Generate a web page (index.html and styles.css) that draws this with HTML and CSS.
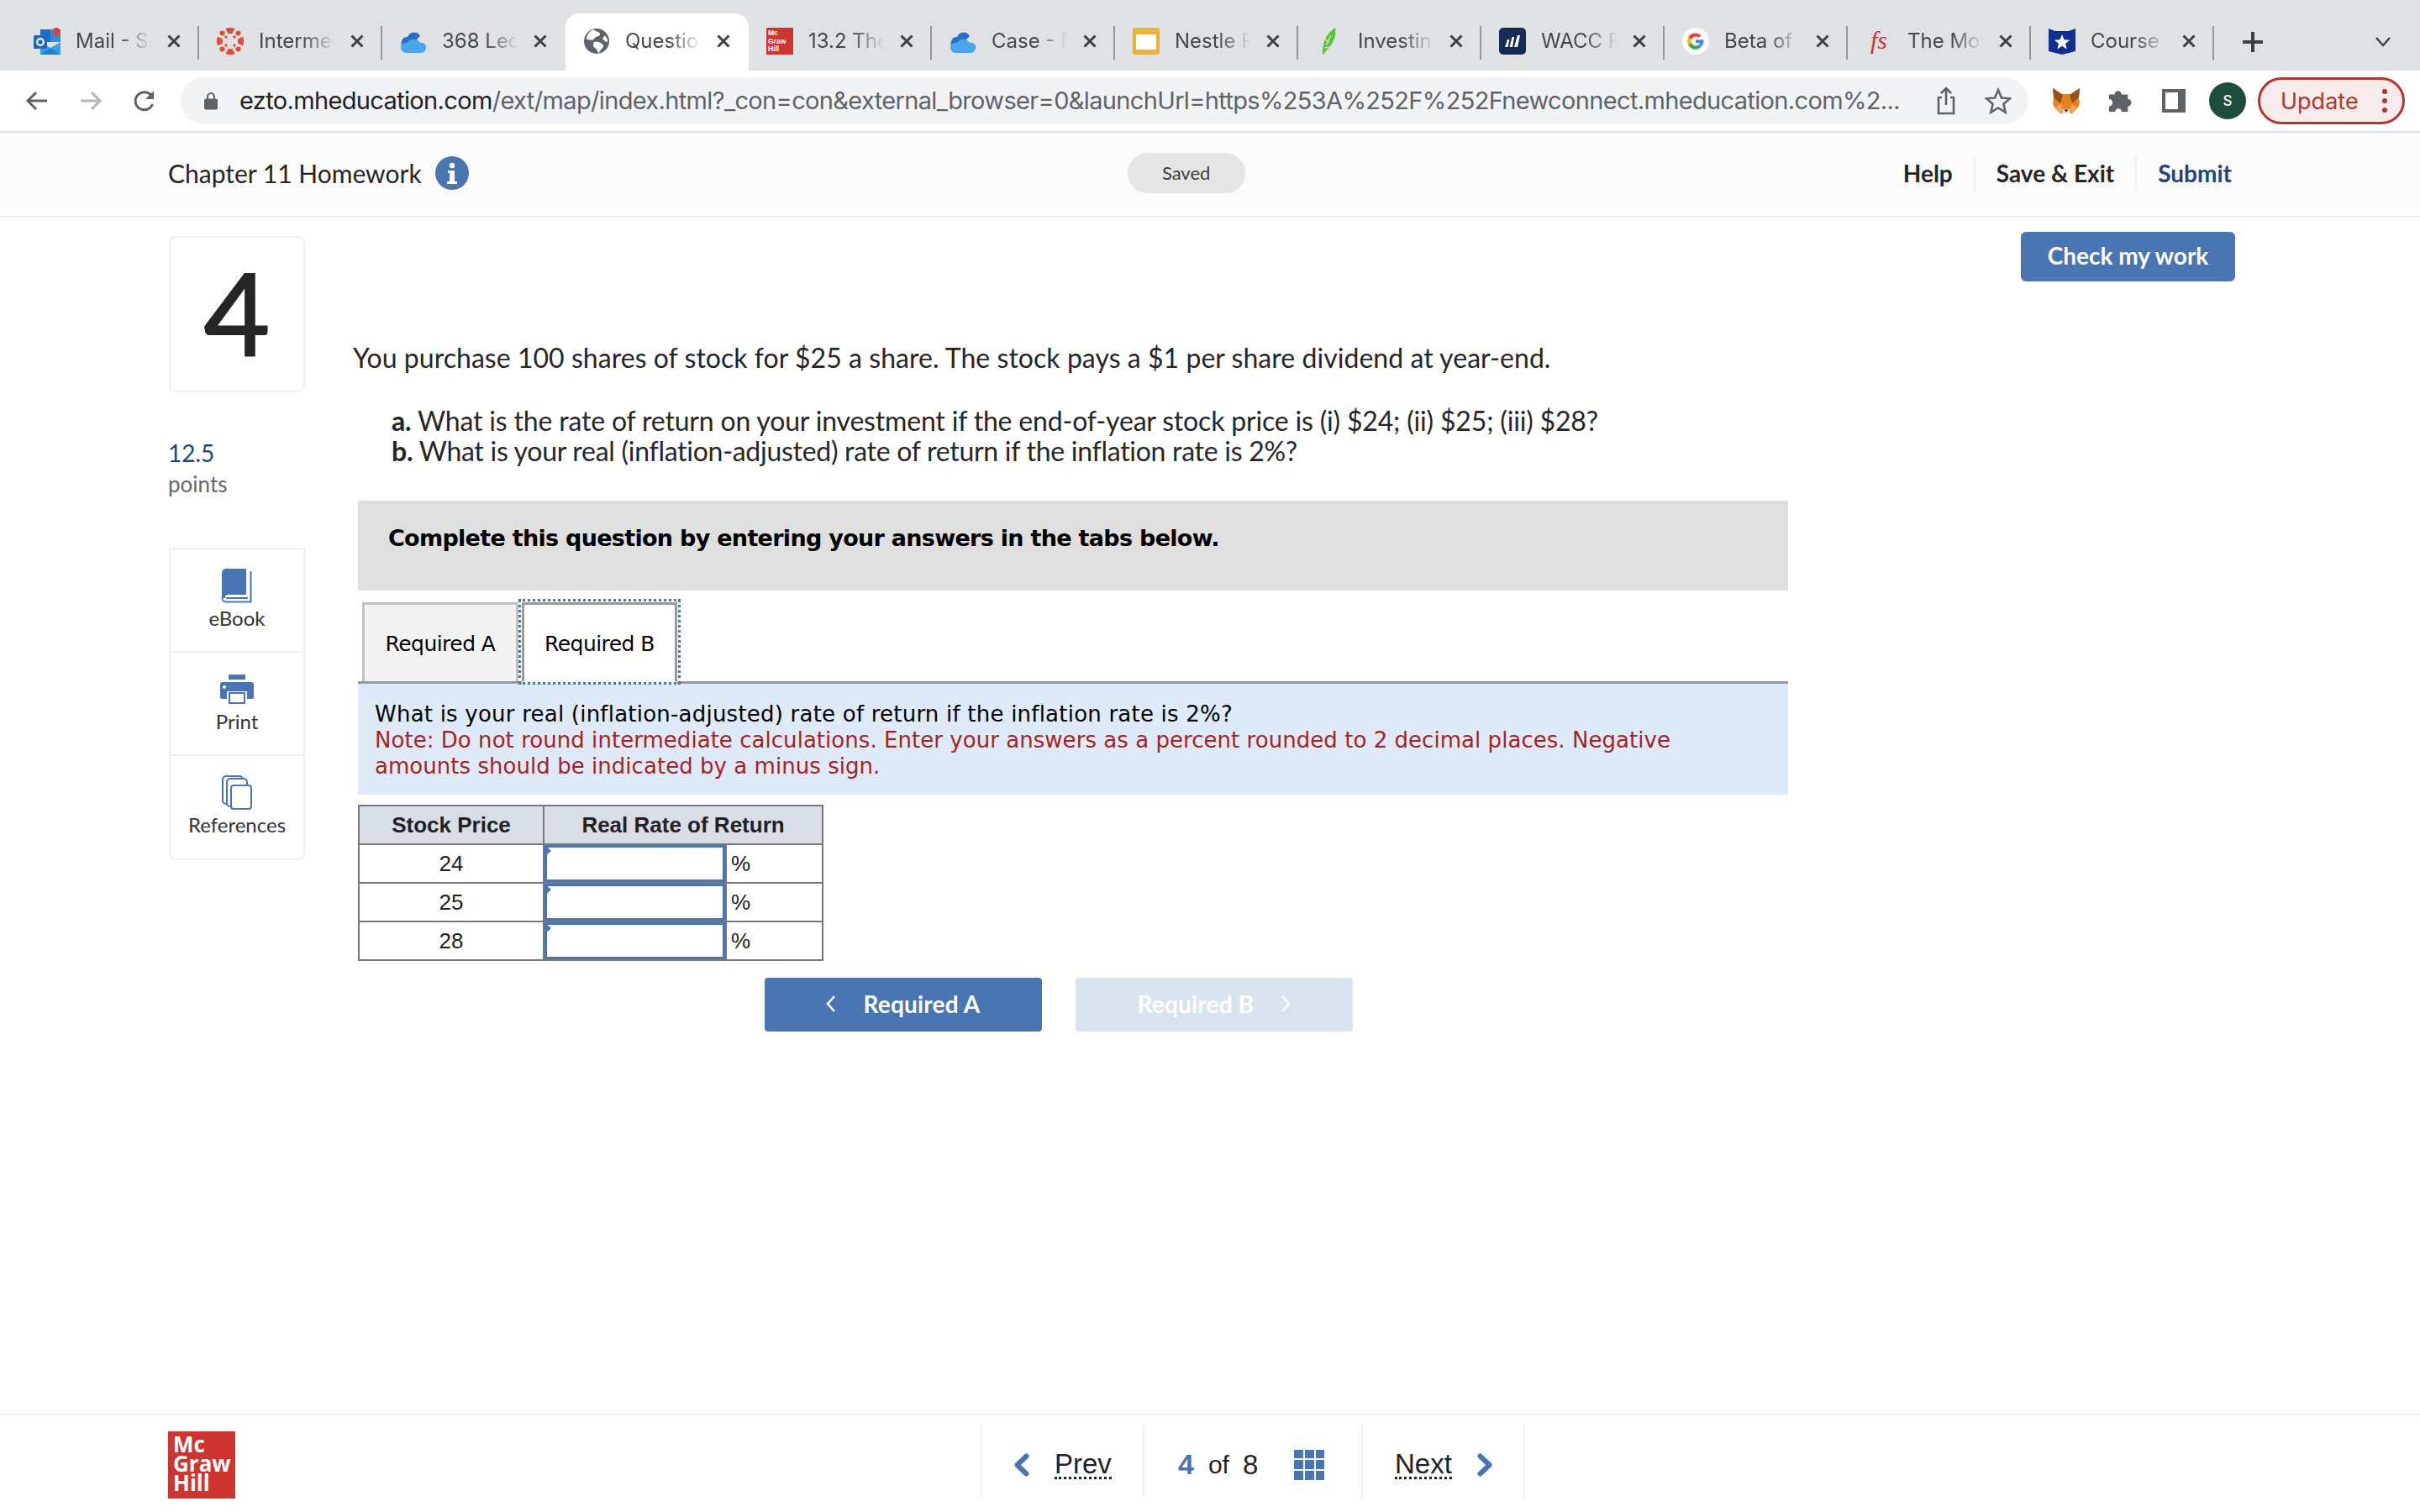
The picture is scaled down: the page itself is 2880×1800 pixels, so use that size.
FILE: index.html
```html
<!DOCTYPE html>
<html lang="en">
<head>
<meta charset="utf-8">
<title>Question 4 - Chapter 11 Homework</title>
<link rel="stylesheet" href="styles.css">
</head>
<body>
<div class="tabstrip">
  <div class="tab"><svg class="fav" viewBox="0 0 32 32"><rect x="8" y="2" width="24" height="15" fill="#1a6fc4"/><rect x="20" y="2" width="12" height="15" fill="#2b8fdc"/><path d="M8 17l12 7 12-7v15H8z" fill="#3aa0e6"/><path d="M8 32l12-8 12 8z" fill="#1f7fd0"/><rect y="9" width="16" height="16" rx="1.5" fill="#1e68bd"/><circle cx="27" cy="5" r="5" fill="#c64a50"/><circle cx="8" cy="17" r="3.800" fill="none" stroke="#fff" stroke-width="2.200"/></svg><span class="title">Mail - Sa</span><svg class="close" viewBox="0 0 16 16"><path d="M1.5 1.5l13 13M14.500 1.500l-13 13"/></svg></div>
  <div class="tab"><svg class="fav" viewBox="0 0 32 32" fill="#de4c36"><path d="M10.500 1a15.500 15.500 0 0 1 11 0L18.500 7h-5zM10.500 31a15.500 15.500 0 0 0 11 0l-3-6h-5zM1 10.500a15.500 15.500 0 0 0 0 11l6-3v-5zM31 10.500a15.500 15.500 0 0 1 0 11l-6-3v-5z"/><circle cx="6.500" cy="6.500" r="3"/><circle cx="25.500" cy="6.500" r="3"/><circle cx="6.500" cy="25.500" r="3"/><circle cx="25.500" cy="25.500" r="3"/><circle cx="11" cy="11" r="1.700"/><circle cx="21" cy="11" r="1.700"/><circle cx="11" cy="21" r="1.700"/><circle cx="21" cy="21" r="1.700"/></svg><span class="title">Intermediate</span><svg class="close" viewBox="0 0 16 16"><path d="M1.5 1.5l13 13M14.500 1.500l-13 13"/></svg></div>
  <div class="tab before-active"><svg class="fav" viewBox="0 0 32 32"><path d="M3 24C-1 17 4 10 9 11c3-7 12-7 15-1l-6 6-9 8z" fill="#2a6fc9"/><path d="M8 30c-4 0-7-3-7-6s3-7 8-6c3-5 11-6 15 0 5-1 8 3 7 7-1 3-3 5-6 5z" fill="#4aa4e8"/></svg><span class="title">368 Lecture</span><svg class="close" viewBox="0 0 16 16"><path d="M1.5 1.5l13 13M14.500 1.500l-13 13"/></svg></div>
  <div class="tab active"><svg class="fav" viewBox="0 0 32 32"><circle cx="16" cy="16" r="15" fill="#5f6368"/><path d="M12 2c3 3 9 3 8 6s-6 2-7 5-6 1-9 1c0-6 4-10 8-12zM14 17c4-1 8 1 10 4 1 3-3 4-4 7-1 2-3 2-3 0 0-3-5-4-5-7 0-2 0-4 2-4zM26 9l3 5v3c-2 0-5-2-6-4z" fill="#fff"/></svg><span class="title">Question 4</span><svg class="close" viewBox="0 0 16 16"><path d="M1.5 1.5l13 13M14.500 1.500l-13 13"/></svg></div>
  <div class="tab"><div class="fav mh-small"><span>Mc</span><span>Graw</span><span>Hill</span></div><span class="title">13.2 The</span><svg class="close" viewBox="0 0 16 16"><path d="M1.5 1.5l13 13M14.500 1.500l-13 13"/></svg></div>
  <div class="tab"><svg class="fav" viewBox="0 0 32 32"><path d="M3 24C-1 17 4 10 9 11c3-7 12-7 15-1l-6 6-9 8z" fill="#2a6fc9"/><path d="M8 30c-4 0-7-3-7-6s3-7 8-6c3-5 11-6 15 0 5-1 8 3 7 7-1 3-3 5-6 5z" fill="#4aa4e8"/></svg><span class="title">Case - Nestle</span><svg class="close" viewBox="0 0 16 16"><path d="M1.5 1.5l13 13M14.500 1.500l-13 13"/></svg></div>
  <div class="tab"><svg class="fav" viewBox="0 0 32 32"><rect width="32" height="32" rx="3" fill="#eab43c"/><rect x="4" y="8" width="24" height="18" fill="#fff"/></svg><span class="title">Nestle Pres</span><svg class="close" viewBox="0 0 16 16"><path d="M1.5 1.5l13 13M14.500 1.500l-13 13"/></svg></div>
  <div class="tab"><svg class="fav" viewBox="0 0 32 32"><path d="M8 32c0-6 0-14 5-22 3-5 7-8 10-10 1 6 0 13-4 19-3 5-7 8-10 13z" fill="#5ac53b"/><path d="M12 21l6-12M11 14l5 3M10 24l5-1" stroke="#dff5d5" stroke-width="1.200" fill="none"/></svg><span class="title">Investing</span><svg class="close" viewBox="0 0 16 16"><path d="M1.5 1.5l13 13M14.500 1.500l-13 13"/></svg></div>
  <div class="tab"><svg class="fav" viewBox="0 0 32 32"><rect width="32" height="32" rx="5" fill="#162c55"/><path d="M7 23l3-9h2.500l-2 9zM12.500 23l3-12H18l-2 12zM18 23l4-14h3l-3 14z" fill="#fff"/></svg><span class="title">WACC For</span><svg class="close" viewBox="0 0 16 16"><path d="M1.5 1.5l13 13M14.500 1.500l-13 13"/></svg></div>
  <div class="tab"><svg class="fav" viewBox="0 0 32 32"><circle cx="16" cy="16" r="16" fill="#fff"/><path d="M16 6.500a9.500 9.500 0 0 1 6.500 2.500l-3 3A5.300 5.300 0 0 0 10.900 14L7.400 11.300A9.500 9.500 0 0 1 16 6.500z" fill="#e94235"/><path d="M7.400 11.300L10.900 14a5.500 5.500 0 0 0 0 4l-3.500 2.700a9.700 9.700 0 0 1 0-9.400z" fill="#fabb05"/><path d="M7.400 20.700L10.900 18a5.300 5.300 0 0 0 8 2.600l3.300 2.600A9.600 9.600 0 0 1 7.400 20.700z" fill="#34a853"/><path d="M25.300 14.200H16v3.900h5.300a4.600 4.600 0 0 1-2.400 2.500l3.300 2.600c2.400-2.300 3.700-5.500 3.100-9z" fill="#4285f4"/></svg><span class="title">Beta of a</span><svg class="close" viewBox="0 0 16 16"><path d="M1.5 1.5l13 13M14.500 1.500l-13 13"/></svg></div>
  <div class="tab"><span class="fav fs-icon">fs</span><span class="title">The Most</span><svg class="close" viewBox="0 0 16 16"><path d="M1.5 1.5l13 13M14.500 1.500l-13 13"/></svg></div>
  <div class="tab"><svg class="fav" viewBox="0 0 32 32"><path d="M0 1l8 3h16l8-3v27l-16 4-16-4z" fill="#10308f"/><path d="M16 8l2.500 6.300 6.700.400-5.200 4.200 1.700 6.500L16 21.800l-5.700 3.600 1.700-6.500-5.200-4.200 6.700-.400z" fill="#fff"/></svg><span class="title">Course He</span><svg class="close" viewBox="0 0 16 16"><path d="M1.5 1.5l13 13M14.500 1.500l-13 13"/></svg></div>
  <svg class="newtab" viewBox="0 0 24 24"><path d="M12 0v24M0 12h24"/></svg>
  <svg class="tabmenu" viewBox="0 0 18 12"><path d="M1 1l8 9 8-9"/></svg>
</div>

<div class="toolbar">
  <svg class="tool back" viewBox="0 0 28 28"><path d="M26 14H3M13 4L3 14l10 10"/></svg>
  <svg class="tool fwd" viewBox="0 0 28 28"><path d="M2 14h23M15 4l10 10-10 10"/></svg>
  <svg class="tool reload" viewBox="0 0 28 28"><path d="M23.500 18a10.500 10.500 0 1 1-1-9.500"/><path class="solid" d="M25 2v10H15z"/></svg>
  <div class="omnibox">
    <svg class="lock" viewBox="0 0 16 22"><path d="M4 9V6a4 4 0 0 1 8 0v3" fill="none" stroke="#5f6368" stroke-width="2"/><rect y="8.500" width="16" height="13" rx="2" fill="#5f6368"/></svg>
    <span class="url"><span class="host">ezto.mheducation.com</span>/ext/map/index.html?_con=con&amp;external_browser=0&amp;launchUrl=https%253A%252F%252Fnewconnect.mheducation.com%2...</span>
    <svg class="share" viewBox="0 0 22 34"><path d="M6 13H2v19h18V13h-4M11 22V2M5 8l6-6 6 6"/></svg>
    <svg class="star" viewBox="0 0 32 32"><path d="M16 3l4 9.500 10 .800-7.600 6.500 2.300 9.900L16 24.500l-8.700 5.200 2.300-9.900L2 13.300l10-.800z"/></svg>
  </div>
  <svg class="fox" viewBox="0 0 32 30"><path d="M0 0l11 7h10L32 0l-1 11 1 8-3 5-6 6H9l-6-6-3-5 1-8z" fill="#e8821e"/><path d="M0 0l12 8-3 10-8-7zM32 0L20 8l3 10 8-7z" fill="#8f5220"/><path d="M3 24l6-6 3 7-3 5zM29 24l-6-6-3 7 3 5z" fill="#efa35c"/><path d="M12 25h8l1 5H11z" fill="#e6dcd2"/><path d="M13.500 25.500h5l-2.500 3z" fill="#222"/></svg>
  <svg class="puzzle" viewBox="0 0 30 30"><path d="M1 8h7a4.500 4.500 0 1 1 9 0h8v6a4.500 4.500 0 1 1 0 9v7H17a4 4 0 0 0-8 0H1v-7a4 4 0 0 0 0-9z"/></svg>
  <div class="sidepanel"></div>
  <div class="avatar">S</div>
  <div class="update"><span>Update</span><i class="kebab"></i></div>
</div>

<header class="apphead">
  <h1>Chapter 11 Homework</h1>
  <svg class="info" viewBox="0 0 40 40"><circle cx="20" cy="20" r="20" fill="#4a75b3"/><circle cx="20" cy="11" r="3.200" fill="#fff"/><path d="M15 17h8v13h3v3H14v-3h3v-10h-2z" fill="#fff"/></svg>
  <div class="saved">Saved</div>
  <nav class="headnav"><a>Help</a><a>Save &amp; Exit</a><a class="submit">Submit</a></nav>
</header>

<main class="page">
  <aside class="side">
    <div class="qnum">4</div>
    <div class="score">12.5</div>
    <div class="points">points</div>
    <div class="tools">
      <div class="toolitem"><svg viewBox="0 0 36 41"><path d="M5 0h24v31H7a3 3 0 0 0-3 3v1H0V5a5 5 0 0 1 5-5z" fill="#4a75b3"/><path d="M34.500 3v36.500H5A4.500 4.500 0 0 1 .500 35a4.500 4.500 0 0 1 4.500-4.500" fill="none" stroke="#4a75b3" stroke-width="2"/><path d="M5 35h26" stroke="#4a75b3" stroke-width="2"/></svg><span>eBook</span></div>
      <div class="toolitem"><svg viewBox="0 0 40 35"><rect x="10" width="20" height="6" fill="#4a75b3"/><path d="M3 9h34a3 3 0 0 1 3 3v15a2 2 0 0 1-2 2h-6v-9H8v9H2a2 2 0 0 1-2-2V12a3 3 0 0 1 3-3z" fill="#4a75b3"/><circle cx="5" cy="15" r="2" fill="#fff"/><rect x="11" y="22" width="18" height="12" fill="#fff" stroke="#4a75b3" stroke-width="2"/></svg><span>Print</span></div>
      <div class="toolitem"><svg viewBox="0 0 36 41" fill="#fff" stroke="#4a75b3" stroke-width="2"><rect x="1" y="1" width="24" height="33" rx="4"/><rect x="6" y="4" width="24" height="33" rx="4"/><rect x="11" y="12" width="24" height="28" rx="3"/></svg><span>References</span></div>
    </div>
  </aside>

  <section class="question">
    <p class="stem">You purchase 100 shares of stock for $25 a share. The stock pays a $1 per share dividend at year-end.</p>
    <div class="parts">
      <p class="part-a"><b>a.</b> What is the rate of return on your investment if the end-of-year stock price is (i) $24; (ii) $25; (iii) $28?</p>
      <p class="part-b"><b>b.</b> What is your real (inflation-adjusted) rate of return if the inflation rate is 2%?</p>
    </div>
    <div class="worksheet">
      <div class="banner">Complete this question by entering your answers in the tabs below.</div>
      <div class="qtabs">
        <div class="qtab">Required A</div>
        <div class="qtab current">Required B</div>
      </div>
      <div class="prompt">
        <div>What is your real (inflation-adjusted) rate of return if the inflation rate is 2%?</div>
        <div class="note">Note: Do not round intermediate calculations. Enter your answers as a percent rounded to 2 decimal places. Negative amounts should be indicated by a minus sign.</div>
      </div>
      <table class="answers">
        <colgroup><col class="col-price"><col class="col-entry"><col class="col-unit"></colgroup>
        <thead><tr><th>Stock Price</th><th colspan="2">Real Rate of Return</th></tr></thead>
        <tbody>
          <tr><td>24</td><td class="entry"><div class="flagged"><input type="text" aria-label="Real rate at 24"></div></td><td class="unit">%</td></tr>
          <tr><td>25</td><td class="entry"><div class="flagged"><input type="text" aria-label="Real rate at 25"></div></td><td class="unit">%</td></tr>
          <tr><td>28</td><td class="entry"><div class="flagged"><input type="text" aria-label="Real rate at 28"></div></td><td class="unit">%</td></tr>
        </tbody>
      </table>
      <div class="stepper">
        <button class="step"><svg viewBox="0 0 12 22"><path d="M10 2L2 11l8 9"/></svg>Required A</button>
        <button class="step off">Required B<svg viewBox="0 0 12 22"><path d="M2 2l8 9-8 9"/></svg></button>
      </div>
    </div>
  </section>

  <button class="check">Check my work</button>
</main>

<footer class="foot">
  <div class="mhlogo"><span>Mc</span><span>Graw</span><span>Hill</span></div>
  <div class="pager">
    <div class="pcell prev"><svg viewBox="0 0 19 28"><path d="M15.500 3.500L4.500 14l11 10.500"/></svg><a>Prev</a></div>
    <div class="pcell count"><b>4</b><span class="of">of</span><span class="total">8</span><div class="gridicon"><i></i><i></i><i></i><i></i><i></i><i></i><i></i><i></i><i></i></div></div>
    <div class="pcell next"><a>Next</a><svg viewBox="0 0 19 28"><path d="M3.500 3.500L14.500 14l-11 10.500"/></svg></div>
  </div>
</footer>
</body>
</html>
```
FILE: styles.css
```css
* { box-sizing: border-box; }
html, body { margin: 0; padding: 0; }
body { width: 2880px; height: 1800px; display: flex; flex-direction: column; background: #fff; font-family: Lato, "Liberation Sans", sans-serif; color: #262626; overflow: hidden; }
p, h1 { margin: 0; font-weight: 400; }

/* browser tab strip */
.tabstrip { height: 84px; background: #dfe1e5; padding-left: 19px; display: flex; align-items: flex-end; flex: none; }
.tab { position: relative; width: 218px; height: 68px; padding: 0 0 2px 21px; display: flex; align-items: center; flex: none; font-family: Inter, sans-serif; }
.tab::after { content: ""; position: absolute; right: 0; top: 15px; height: 40px; width: 2px; background: #93959a; }
.tab.before-active::after, .tab.active::after { display: none; }
.tab.active { background: #fff; border-radius: 16px 16px 0 0; }
.fav { width: 32px; height: 32px; flex: none; }
.title { width: 95px; margin-left: 18px; font-size: 24px; line-height: 32px; color: #45474b; white-space: nowrap; overflow: hidden; -webkit-mask-image: linear-gradient(90deg, #000 55%, transparent 95%); mask-image: linear-gradient(90deg, #000 55%, transparent 95%); }
.close { width: 16px; height: 16px; margin-left: 14px; flex: none; fill: none; stroke: #3c3f43; stroke-width: 3; }
.mh-small { background: #cf3530; color: #fff; font: 700 8.5px/9.5px "Liberation Sans", sans-serif; padding: 2px 0 0 2px; display: flex; flex-direction: column; }
.fs-icon { font: italic 400 30px/30px "Liberation Serif", serif; color: #c8363a; text-align: center; }
.newtab { width: 24px; height: 24px; margin: 0 0 22px 34px; fill: none; stroke: #3c4043; stroke-width: 4; flex: none; }
.tabmenu { width: 18px; height: 12px; margin: 0 0 28px 134px; fill: none; stroke: #3c4043; stroke-width: 2.4; flex: none; }

/* browser toolbar */
.toolbar { height: 74px; flex: none; background: #fff; border-bottom: 2px solid #dfe1e5; display: flex; align-items: flex-start; padding: 8px 0 0 30px; }
.tool { width: 28px; height: 28px; margin-top: 14px; fill: none; stroke: #5f6368; stroke-width: 3; flex: none; }
.tool.fwd { margin-left: 36px; stroke: #b4b6b9; }
.tool.reload { margin-left: 36px; }
.solid { fill: #5f6368; stroke: none; }
.omnibox { width: 2199px; height: 56px; margin-left: 29px; background: #f1f3f4; border-radius: 28px; display: flex; align-items: center; padding-left: 28px; flex: none; }
.lock { width: 16px; height: 22px; flex: none; }
.url { width: 1990px; margin-left: 26px; font: 400 29px/36px Inter, sans-serif; letter-spacing: -0.65px; color: #5f6368; white-space: nowrap; flex: none; }
.host { color: #202124; }
.share { width: 22px; height: 34px; margin-left: 30px; fill: none; stroke: #5f6368; stroke-width: 2.6; flex: none; }
.star { width: 32px; height: 32px; margin-left: 35px; fill: none; stroke: #5f6368; stroke-width: 2.6; flex: none; }
.fox { width: 32px; height: 30px; margin: 13px 0 0 29px; flex: none; }
.puzzle { width: 28px; height: 28px; margin: 13px 0 0 34px; fill: #5f6368; flex: none; }
.sidepanel { width: 28px; height: 28px; margin: 14px 0 0 36px; border: 4px solid #5f6368; border-right-width: 9px; flex: none; }
.avatar { width: 44px; height: 44px; margin: 6px 0 0 28px; border-radius: 50%; background: #1e4d3f; color: #fff; font: 500 17px/44px Inter, sans-serif; text-align: center; flex: none; }
.update { width: 175px; height: 56px; margin-left: 14px; border: 3px solid #b3352b; border-radius: 28px; background: #f7eceb; color: #b3352b; display: flex; align-items: center; padding-left: 24px; font: 400 27px Inter, sans-serif; flex: none; }
.kebab { width: 6px; height: 6px; margin-left: 28px; border-radius: 50%; background: #b3352b; box-shadow: 0 -11px 0 #b3352b, 0 11px 0 #b3352b; }

/* assignment header */
.apphead { height: 101px; flex: none; background: #fbfbfb; border-bottom: 2px solid #f0f0f0; display: flex; align-items: flex-start; padding: 28px 220px 0 200px; }
.apphead h1 { font-size: 30px; line-height: 40px; color: #262626; }
.info { width: 40px; height: 40px; margin: 0 0 0 16px; flex: none; }
.saved { width: 140px; height: 48px; margin: -4px 0 0 784px; background: #e5e5e5; border-radius: 24px; font-size: 22px; line-height: 48px; text-align: center; color: #3d3d3d; flex: none; }
.headnav { margin-left: auto; display: flex; margin-right: 4px; font-size: 28px; font-weight: 700; line-height: 40px; }
.headnav a { padding: 0 25px; border-right: 2px solid #efefef; }
.headnav a:last-child { padding-right: 0; border-right: 0; }
.submit { color: #1f4480; }

/* page body */
.page { flex: 1; display: flex; align-items: flex-start; padding: 22px 220px 0 201px; min-height: 0; }
.side { width: 162px; flex: none; }
.qnum { height: 186px; border: 2px solid #efefef; border-radius: 8px; font-size: 136px; line-height: 178px; text-align: center; color: #262626; -webkit-text-stroke: 2px #262626; }
.score { margin-top: 54px; margin-left: -1px; font-size: 28px; line-height: 36px; color: #1f4480; }
.points { margin-top: 2px; margin-left: -1px; font-size: 26px; line-height: 34px; color: #666; }
.tools { margin-top: 59px; border: 2px solid #efefef; border-radius: 0 0 8px 8px; height: 372px; }
.toolitem { height: 123px; padding-top: 23px; display: flex; flex-direction: column; align-items: center; border-bottom: 2px solid #efefef; font-size: 24px; line-height: 30px; color: #333; }
.toolitem:last-child { border-bottom: 0; }
.toolitem svg { height: 41px; width: 40px; margin-bottom: 3px; }

.question { width: 1714px; margin-left: 57px; flex: none; padding-top: 126px; }
.stem { font-size: 32px; line-height: 38px; letter-spacing: 0.04px; }
.parts { margin: 38px 0 0 46px; font-size: 32px; line-height: 36px; }
.part-a { letter-spacing: -0.18px; }
.part-b { letter-spacing: -0.28px; }
.worksheet { margin: 41px 0 0 6px; width: 1702px; }
.banner { height: 107px; background: #dfdfdf; padding: 28px 36px 0; font: 700 27px/34px "DejaVu Sans", sans-serif; letter-spacing: -0.7px; color: #000; }
.qtabs { margin-top: 14px; display: flex; border-bottom: 3px solid #999; padding-left: 5px; }
.qtab { width: 186px; height: 94px; background: #f3f3f3; border: solid #c0c0c0; border-width: 3px 3px 0; font: 400 25px/94px "DejaVu Sans", sans-serif; letter-spacing: -0.55px; text-align: center; color: #000; }
.qtab.current { position: relative; width: 185px; margin-left: 4px; background: #fff; border-color: #999; outline: 3px dotted #4a75b3; outline-offset: 1px; box-shadow: 0 3px 0 #fff; }
.prompt { height: 132px; background: #deeaf8; padding: 21px 21px 0 20px; font: 400 26px/31px "DejaVu Sans", sans-serif; letter-spacing: 0.22px; color: #000; }
.note { color: #a82320; letter-spacing: 0.04px; }

.answers { margin-top: 12px; width: 552px; table-layout: fixed; border-collapse: collapse; font: 400 26px/30px "Liberation Sans", sans-serif; color: #222; }
.col-price { width: 220px; }
.col-entry { width: 217px; }
.col-unit { width: 115px; }
.answers th, .answers td { border: 2px solid #777; padding: 0; height: 46px; text-align: center; }
.answers th { background: #d8dde6; font-weight: 700; }
.answers td.unit { text-align: left; padding-left: 5px; }
.flagged { position: relative; height: 44px; }
.flagged::before { content: ""; position: absolute; left: 0; top: 0; border-left: 8px solid #4a75b3; border-top: 7px solid transparent; border-bottom: 7px solid transparent; }
.flagged input { display: block; width: 100%; height: 44px; margin: 0; border: 3px solid #4a75b3; border-radius: 0; background: #fff; padding: 0; }

.stepper { margin: 20px 0 0 484px; display: flex; gap: 40px; }
.step { width: 330px; height: 64px; border: 0; border-radius: 4px; background: #4a75b3; color: #fff; font: 700 28px Lato, sans-serif; letter-spacing: 0.2px; display: flex; align-items: center; justify-content: center; gap: 32px; padding: 0 0 2px; }
.step svg { width: 12px; height: 22px; fill: none; stroke: #fff; stroke-width: 2.5; }
.step.off { background: #d9e3ef; }
.check { width: 255px; height: 59px; margin: -5px 0 0 auto; border: 0; border-radius: 6px; background: #4a75b3; color: #fff; font: 700 28px Lato, sans-serif; padding: 0 0 4px; flex: none; }

/* footer */
.foot { height: 117px; flex: none; border-top: 2px solid #f0f0f0; display: flex; align-items: flex-start; padding: 19px 0 0 200px; }
.mhlogo { width: 80px; height: 80px; background: #cf3530; color: #fff; font: 700 26px/23px "Open Sans", sans-serif; padding: 4px 0 0 6px; display: flex; flex-direction: column; flex: none; }
.pager { margin: -9px 0 0 887px; height: 88px; display: flex; border-right: 2px solid #f0f0f0; }
.pcell { height: 88px; padding-top: 9px; border-left: 2px solid #f0f0f0; display: flex; align-items: center; flex: none; font: 400 33px "Liberation Sans", sans-serif; color: #222; }
.pcell svg { width: 19px; height: 28px; fill: none; stroke: #4a75b3; stroke-width: 6; stroke-linecap: round; stroke-linejoin: round; flex: none; }
.pcell a { border-bottom: 3px dotted #222; line-height: 31px; }
.prev { width: 193px; padding-left: 37px; gap: 30px; }
.count { width: 260px; padding-left: 40px; }
.count b { color: #4a75b3; font-size: 34px; }
.of { margin-left: 17px; font-size: 30px; }
.total { margin-left: 16px; }
.gridicon { margin-left: 43px; width: 36px; height: 36px; display: grid; grid-template-columns: repeat(3, 1fr); gap: 2px; }
.gridicon i { background: #4a75b3; }
.next { width: 193px; padding-left: 38px; gap: 30px; }
```
